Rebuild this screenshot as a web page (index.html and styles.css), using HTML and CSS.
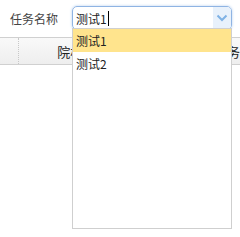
FILE: index.html
```html
<!DOCTYPE html>
<html lang="zh-CN">
<head>
  <meta charset="UTF-8">
  <title>任务名称</title>
  <link rel="stylesheet" href="styles.css">
</head>
<body>
  <div class="toolbar">
    <label class="field-label">任务名称</label>
    <div class="combo">
      <div class="combo-text">测试1<span class="caret"></span></div>
      <div class="combo-arrow">
        <svg width="12" height="8" viewBox="0 0 12 8"><path d="M1.5 1.5 L6 6 L10.5 1.5" fill="none" stroke="#7fb2e5" stroke-width="2"/></svg>
      </div>
    </div>
  </div>

  <div class="grid-header">
    <div class="cell cell-check"></div>
    <div class="cell cell-name">院校名称</div>
    <div class="cell cell-task">务</div>
  </div>

  <!-- combobox panel -->
  <div class="combo-panel">
    <div class="combo-item selected">测试1</div>
    <div class="combo-item">测试2</div>
  </div>
</body>
</html>
```

FILE: styles.css
```css
* {
  box-sizing: border-box;
}

html, body {
  margin: 0;
  padding: 0;
  background: #fff;
  font-family: "Noto Sans CJK SC", "Noto Sans", sans-serif;
  font-size: 12px;
  color: #333;
}

.toolbar {
  display: flex;
  align-items: center;
  height: 32px;
  padding: 4px 0 0 10px;
}

.field-label {
  width: 62px;
  font-size: 12px;
  color: #444;
}

.combo {
  display: flex;
  width: 160px;
  height: 24px;
  border: 1px solid #8fb4e3;
  border-radius: 5px;
  overflow: hidden;
  box-shadow: 0 0 3px 0 #b7d0ef;
}

.combo-text {
  flex: 1;
  display: flex;
  align-items: center;
  padding-left: 3px;
  font-size: 12px;
  color: #222;
}

.caret {
  display: inline-block;
  width: 1px;
  height: 15px;
  margin-left: 1px;
  background: #000;
}

.combo-arrow {
  width: 18px;
  display: flex;
  align-items: center;
  justify-content: center;
  background: #e8f1fb;
}

.grid-header {
  display: flex;
  margin-top: 5px;
  height: 28px;
  border-top: 1px solid #d0d0d0;
  border-bottom: 1px solid #d0d0d0;
  background: linear-gradient(to bottom, #f9f9f9, #eeeeee);
}

.cell {
  display: flex;
  align-items: center;
  font-size: 13px;
  color: #222;
}

.cell-check {
  width: 20px;
  border-right: 1px dotted #c8c8c8;
}

.cell-name {
  width: 212px;
  padding-left: 38px;
  border-right: 1px solid #d0d0d0;
}

.cell-task {
  padding-left: 3px;
}

.combo-panel {
  position: absolute;
  left: 72px;
  top: 28px;
  width: 160px;
  height: 201px;
  border: 1px solid #cfcfcf;
  background: #fff;
}

.combo-item {
  height: 23px;
  line-height: 23px;
  padding-left: 3px;
  font-size: 12px;
  color: #222;
}

.combo-item.selected {
  background: #ffe48d;
}
```
